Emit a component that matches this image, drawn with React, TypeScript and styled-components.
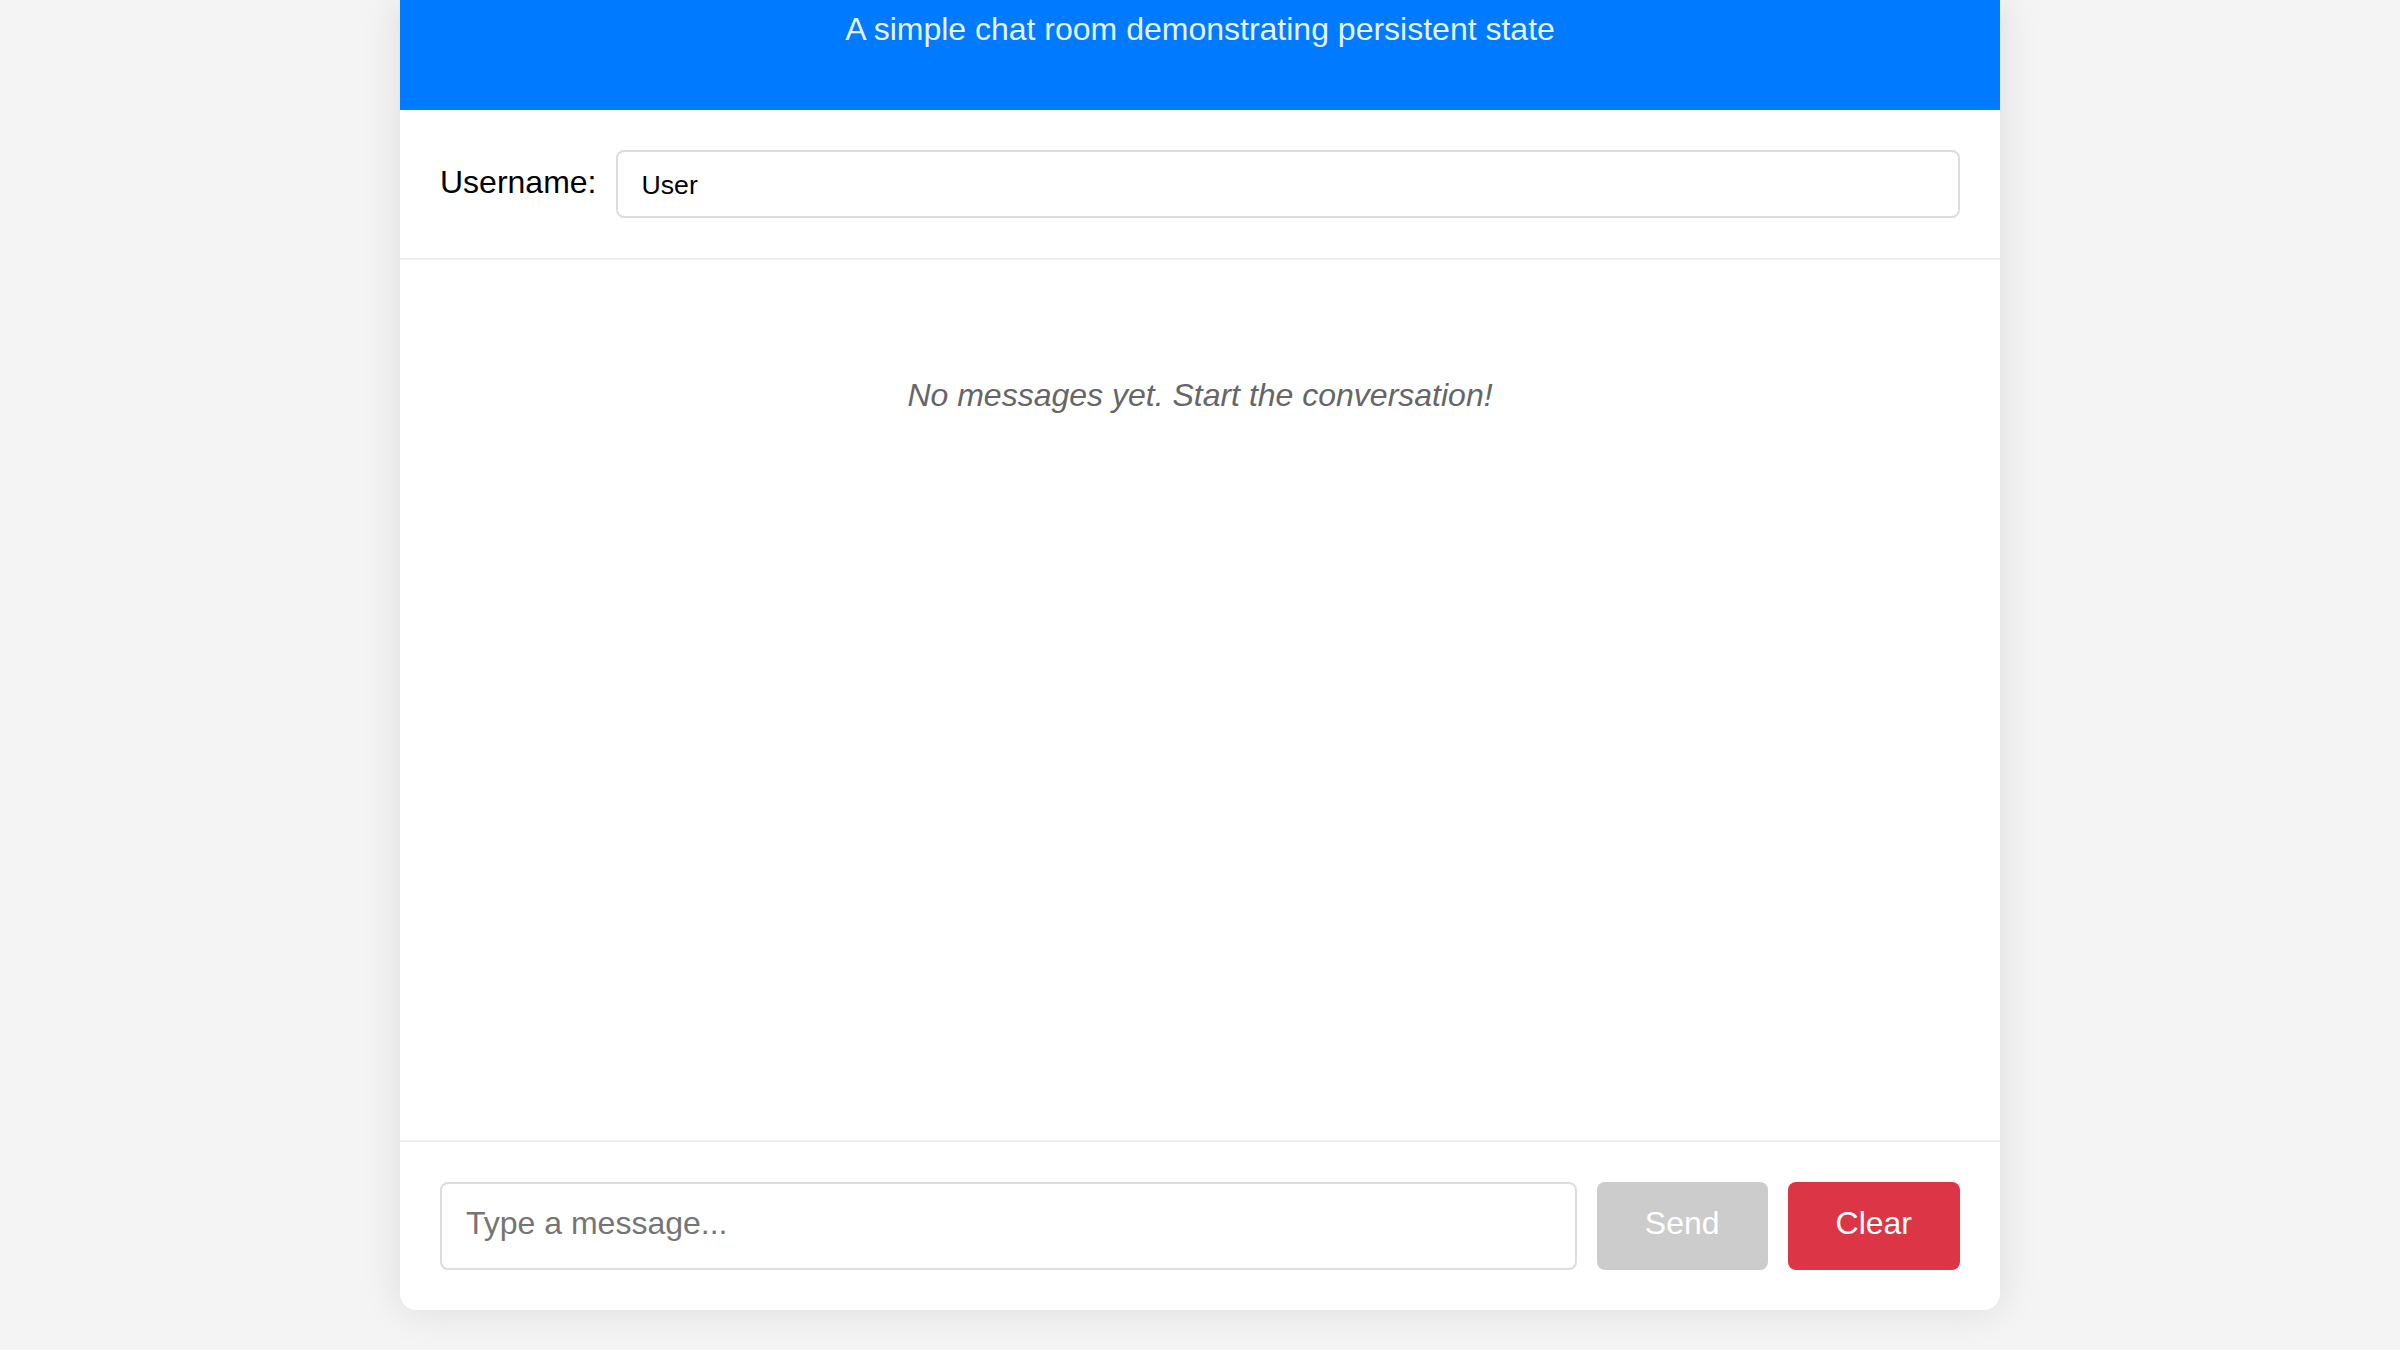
import { useState } from 'react';
import styled, { createGlobalStyle } from 'styled-components';

const GlobalStyle = createGlobalStyle`
  html, body {
    margin: 0;
    padding: 0;
    background: #f4f4f4;
    font-family: 'Liberation Sans', Arial, sans-serif;
  }
  body {
    min-height: 1350px;
  }
`;

const ChatContainer = styled.div`
  width: 1600px;
  height: 1310px;
  margin: 0 auto;
  background: #fff;
  border-radius: 0 0 16px 16px;
  box-shadow: 0 0 40px rgba(0, 0, 0, 0.1);
  display: flex;
  flex-direction: column;
  overflow: hidden;
`;

const ChatHeader = styled.div`
  background: #007bff;
  color: #fff;
  height: 110px;
  box-sizing: border-box;
  padding: 11px 40px 0;
  text-align: center;
`;

const Subtitle = styled.p`
  margin: 0;
  font-size: 32px;
  opacity: 0.9;
`;

const UserRow = styled.div`
  display: flex;
  align-items: center;
  padding: 40px;
  border-bottom: 2px solid #eee;
`;

const UserLabel = styled.label`
  font-size: 32px;
  color: #000;
  margin-right: 19px;
  margin-top: -4px;
`;

const UserInput = styled.input`
  flex: 1;
  height: 68px;
  box-sizing: border-box;
  padding: 3px 24px 0;
  border: 2px solid #ddd;
  border-radius: 8px;
  font-family: 'Liberation Sans', Arial, sans-serif;
  font-size: 26.67px;
  color: #000;
  outline: none;
`;

const Messages = styled.div`
  flex: 1;
  padding: 40px;
  overflow-y: auto;
`;

const EmptyState = styled.div`
  text-align: center;
  color: #666;
  font-style: italic;
  font-size: 32px;
  padding-top: 77px;
`;

const InputBar = styled.div`
  display: flex;
  gap: 20px;
  padding: 40px;
  border-top: 2px solid #eee;
`;

const MessageInput = styled.input`
  flex: 1;
  height: 88px;
  box-sizing: border-box;
  padding: 0 24px 5px;
  border: 2px solid #ddd;
  border-radius: 8px;
  font-family: 'Liberation Sans', Arial, sans-serif;
  font-size: 32px;
  outline: none;
  &::placeholder {
    color: #757575;
  }
`;

const ActionButton = styled.button<{ variant: 'send' | 'clear' }>`
  border: none;
  border-radius: 8px;
  padding: 0 48px 5px;
  font-family: 'Liberation Sans', Arial, sans-serif;
  font-size: 32px;
  color: #fff;
  background: ${({ variant }) => (variant === 'clear' ? '#dc3545' : '#cccccc')};
  cursor: ${({ disabled }) => (disabled ? 'not-allowed' : 'pointer')};
`;

export default function App() {
  const [username, setUsername] = useState('User');
  const [draft, setDraft] = useState('');

  return (
    <>
      <GlobalStyle />
      <ChatContainer>
        <ChatHeader>
          <Subtitle>A simple chat room demonstrating persistent state</Subtitle>
        </ChatHeader>
        <UserRow>
          <UserLabel htmlFor="username">Username:</UserLabel>
          <UserInput id="username" value={username} onChange={(e) => setUsername(e.target.value)} />
        </UserRow>
        <Messages>
          <EmptyState>No messages yet. Start the conversation!</EmptyState>
        </Messages>
        <InputBar>
          <MessageInput placeholder="Type a message..." value={draft} onChange={(e) => setDraft(e.target.value)} />
          <ActionButton variant="send" disabled={!draft.trim()}>
            Send
          </ActionButton>
          <ActionButton variant="clear">Clear</ActionButton>
        </InputBar>
      </ChatContainer>
    </>
  );
}
